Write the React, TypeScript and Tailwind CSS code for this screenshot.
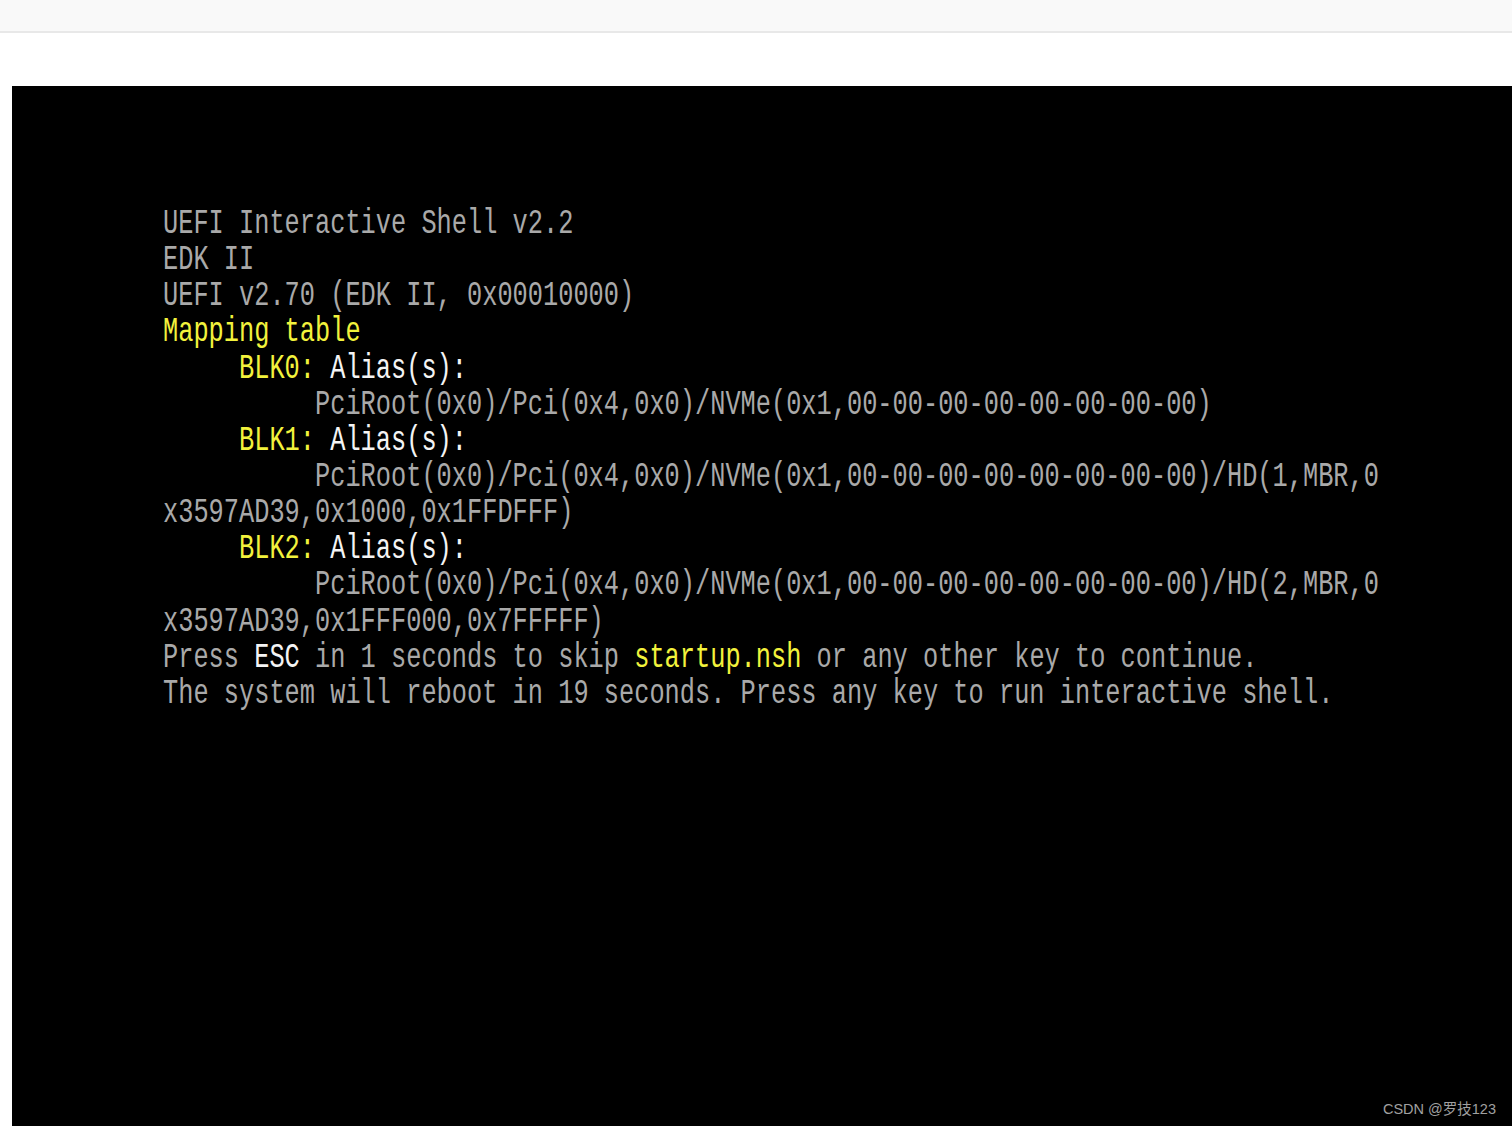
const G = ({ children }: { children: React.ReactNode }) => <span className="text-[#a9a9a9]">{children}</span>;
const Y = ({ children }: { children: React.ReactNode }) => <span className="text-[#f2f23c]">{children}</span>;
const W = ({ children }: { children: React.ReactNode }) => <span className="text-[#f4f4f4]">{children}</span>;

const Line = ({ children }: { children?: React.ReactNode }) => (
  <div className="h-[36.15px] leading-[36.15px] whitespace-pre scale-y-[1.35]">{children}</div>
);

const path = "PciRoot(0x0)/Pci(0x4,0x0)/NVMe(0x1,00-00-00-00-00-00-00-00)";

export default function App() {
  return (
    <div className="w-[1512px] h-[1126px] overflow-hidden bg-white flex flex-col">
      {/* top bar */}
      <div className="h-[33px] shrink-0 bg-[#f9f9f9] border-b-2 border-[#e8e8e8]" />
      <div className="h-[53px] shrink-0" />

      {/* console screenshot */}
      <div className="relative flex-1 ml-[12px] bg-black pt-[121px] pl-[151px] font-['Liberation_Mono',monospace] text-[25.33px]">
        <Line><G>UEFI Interactive Shell v2.2</G></Line>
        <Line><G>EDK II</G></Line>
        <Line><G>UEFI v2.70 (EDK II, 0x00010000)</G></Line>
        <Line><Y>Mapping table</Y></Line>
        <Line>{"     "}<Y>BLK0:</Y> <W>Alias(s):</W></Line>
        <Line><G>{"          " + path}</G></Line>
        <Line>{"     "}<Y>BLK1:</Y> <W>Alias(s):</W></Line>
        <Line><G>{"          " + path + "/HD(1,MBR,0"}</G></Line>
        <Line><G>x3597AD39,0x1000,0x1FFDFFF)</G></Line>
        <Line>{"     "}<Y>BLK2:</Y> <W>Alias(s):</W></Line>
        <Line><G>{"          " + path + "/HD(2,MBR,0"}</G></Line>
        <Line><G>x3597AD39,0x1FFF000,0x7FFFFF)</G></Line>
        <Line>
          <G>Press </G><W>ESC</W><G> in 1 seconds to skip </G><Y>startup.nsh</Y>
          <G> or any other key to continue.</G>
        </Line>
        <Line><G>The system will reboot in 19 seconds. Press any key to run interactive shell.</G></Line>

        {/* watermark */}
        <div className="absolute right-[16px] bottom-[5px] text-[14.5px] text-[#a0a0a0] font-['Liberation_Sans','Noto_Sans_CJK_SC',sans-serif]">
          CSDN @罗技123
        </div>
      </div>
    </div>
  );
}
